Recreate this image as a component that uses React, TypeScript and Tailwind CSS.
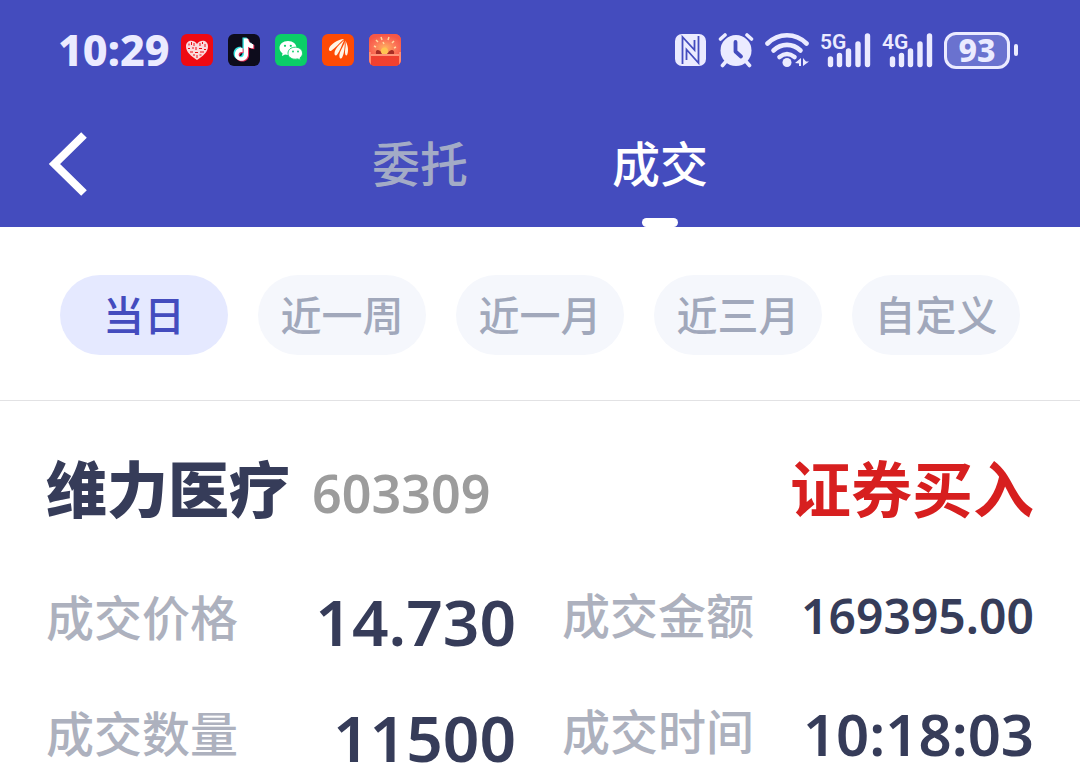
import React from "react";

const cjk = "font-['Noto_Sans','Noto_Sans_CJK_SC',sans-serif]";

function RedHeartIcon() {
  return (
    <svg viewBox="0 0 32 32" className="size-8" role="img" aria-label="红心">
      <rect width="32" height="32" rx="6" fill="#ee0a12" />
      <path d="M16 26 C10 22 5 18 5 12.500 C5 6 12.500 5 16 10 C19.500 5 27 6 27 12.500 C27 18 22 22 16 26Z" fill="#fbdcdc" />
      <path d="M8 9.500v2M10.500 8v3M13 9v3M19 9v3M21.500 8v2M24 10v3M7 14.500h2M11 14h2M15 13v3M18 14.500h3M23 15.500h2M9 18h3M14 18.500h3M19 18h4M12 21h2M16 21v3M18.500 21h2" stroke="#ee0a12" strokeWidth="1" fill="none" />
    </svg>
  );
}

function NoteIcon() {
  const note = "M16.500 5.500h4c.3 3.200 2.200 5.100 5 5.400v4c-1.900 0-3.600-.6-5-1.600v7.200c0 8.200-12.500 8.300-12.500.3 0-4.300 3.500-6.800 7.300-6.300v4.100c-4.700-1-4.700 4.800-1.500 4.800 1.700 0 2.700-1.200 2.700-3z";
  return (
    <svg viewBox="0 0 32 32" className="size-8" role="img" aria-label="抖音">
      <rect width="32" height="32" rx="6" fill="#0d0c1c" />
      <g transform="translate(-1.500 -1.300) scale(1.050)">
        <path d={note} fill="#35e3df" transform="translate(-1.300 -1)" />
        <path d={note} fill="#f0325c" transform="translate(1 .8)" />
        <path d={note} fill="#fff" />
      </g>
    </svg>
  );
}

function ChatIcon() {
  return (
    <svg viewBox="0 0 32 32" className="size-8" role="img" aria-label="微信">
      <rect width="32" height="32" rx="6" fill="#0bce68" />
      <path d="M13 7c-5 0-8.500 3-8.500 7 0 2.200 1.200 4 3 5.300L7 22l3-1.500c1 .3 2 .4 3 .4 5 0 8.500-3 8.500-6.900S18 7 13 7z" fill="#fff" />
      <path d="M20.300 13.200c-4.300 0-7.300 2.500-7.300 6s3 6 7.300 6c.9 0 1.700-.1 2.500-.3l2.700 1.300-.5-2.300c1.500-1.100 2.500-2.700 2.500-4.700 0-3.500-3-6-7.200-6z" fill="#fff" stroke="#0bce68" strokeWidth=".9" />
      <g fill="#0bce68">
        <circle cx="10" cy="11.800" r="1.100" />
        <circle cx="15.800" cy="11.800" r="1.100" />
        <circle cx="18" cy="17.500" r=".9" />
        <circle cx="23" cy="17.500" r=".9" />
      </g>
    </svg>
  );
}

function FeatherIcon() {
  return (
    <svg viewBox="0 0 32 32" className="size-8" role="img" aria-label="证券">
      <rect width="32" height="32" rx="6" fill="#fe4a04" />
      <g fill="#fff5e5">
        <path d="M22 5C16 5.500 8.500 10 7 14.500c-.5 2 .8 3.200 2.300 2.200C13.500 14 17 9.500 22 5z" />
        <path d="M22.300 6C18 10 12.500 15 12.500 19.500c0 2 1.600 2.600 2.700 1C18 17 19.500 11.500 22.300 6z" />
        <path d="M22.700 7.500C22 12.500 16.500 18 17.500 23c.4 1.900 1.900 2 2.800.3C22.300 19 23 13 22.700 7.500z" />
        <path d="M23.200 6.500c1.300 5-.7 9.500 0 13.500.3 1.800 1.500 1.800 2.200.2C26.800 16 25.800 10.500 23.200 6.500z" />
      </g>
    </svg>
  );
}

function FestiveIcon() {
  return (
    <svg viewBox="0 0 32 32" className="size-8" role="img" aria-label="红包">
      <defs>
        <linearGradient id="box" x1="0" y1="0" x2="0" y2="1">
          <stop offset="0" stopColor="#ef4030" />
          <stop offset="1" stopColor="#f2402f" />
        </linearGradient>
        <radialGradient id="glow" cx=".5" cy=".65" r=".6">
          <stop offset="0" stopColor="#ffb05e" />
          <stop offset=".6" stopColor="#fb7257" />
          <stop offset="1" stopColor="#f75746" />
        </radialGradient>
        <clipPath id="tile"><rect width="32" height="32" rx="6" /></clipPath>
      </defs>
      <g clipPath="url(#tile)">
        <rect width="32" height="32" fill="#f75746" />
        <rect width="32" height="21" fill="url(#glow)" />
        <path d="M7 6l2 2M12 3l1 3M20 3l-1 3M25 7l-2 2M5 12l2 1M27 13l-2 1M14 8l1 2" stroke="#ffd9a0" strokeWidth="1.500" />
        <path d="M7 20c-1-5 3-5 6-1h6c3-5 7-3 6 1z" fill="#a72d25" />
        <circle cx="15.500" cy="17" r="3.600" fill="#ffc552" />
        <rect y="20" width="32" height="2" fill="#ff9478" />
        <rect y="22" width="32" height="10" fill="url(#box)" />
        <path d="M0 18h2v14H0zM30 18h2v14h-2z" fill="#ff8a72" />
      </g>
    </svg>
  );
}

function NfcIcon() {
  return (
    <svg viewBox="0 0 32 32" className="size-8" role="img" aria-label="NFC">
      <rect x="0" y="0" width="31" height="32" rx="7" fill="#ebebff" />
      <path d="M7.500 30V3l12 13V6M11.500 26V15.500l12 13.500V2" fill="none" stroke="#444cbe" strokeWidth="1.800" />
    </svg>
  );
}

function AlarmIcon() {
  return (
    <svg viewBox="0 0 36 36" className="size-9" role="img" aria-label="闹钟">
      <circle cx="18" cy="18.500" r="15.500" fill="#ebebff" />
      <path d="M7 0 0 7l3 4 9-8zM29 0l7 7-3 4-9-8z" fill="#444cbe" />
      <path d="M2.500 7 7 3M33.500 7 29 3M7.500 30 4.500 33.500M28.500 30l3 3.500" stroke="#ebebff" strokeWidth="3.600" strokeLinecap="round" />
      <path d="M17.500 10v9.500l5.500 5" fill="none" stroke="#444cbe" strokeWidth="3.800" strokeLinecap="round" strokeLinejoin="round" />
    </svg>
  );
}

function WifiIcon() {
  return (
    <svg viewBox="0 0 44 36" className="h-9 w-11" role="img" aria-label="无线网络">
      <g fill="none" stroke="#ebebff" strokeWidth="4.600" strokeLinecap="round">
        <path d="M2.500 11.500c11-11 28-11 39 0" />
        <path d="M8.500 18.500c8-7.500 19-7.500 27 0" />
        <path d="M14.500 25c5-4 10-4 15 0" />
      </g>
      <circle cx="22" cy="30.500" r="4.500" fill="#ebebff" />
      <path d="M36 26v8h-2v-2.500l-4-.5zM38 26v8l6-4.500h-3z" fill="#ebebff" />
    </svg>
  );
}

function Signal({ label }: { label: string }) {
  return (
    <div className="relative h-9 w-[51px]">
      <svg viewBox="0 0 51 36" className="h-9 w-[51px]" aria-hidden="true">
        <path d="M10.500 27v5.500M19.500 23.500v9M28.500 19v13.500M38 12v20.500M47.500 4v28.500" stroke="#ebebff" strokeWidth="5.400" strokeLinecap="round" />
      </svg>
      <span className="absolute left-0 top-0 font-['Roboto',sans-serif] text-[21px] leading-5 font-semibold">{label}</span>
    </div>
  );
}

function Battery() {
  return (
    <div className="flex items-center gap-1" aria-label="电量 93%">
      <div className="flex h-[37px] w-[66px] items-center justify-center rounded-xl border-[3px] border-[#ebebff] bg-[#6a72cf] text-[32px] leading-8 font-extrabold">93</div>
      <div className="h-3 w-1 rounded-full bg-[#ebebff]" />
    </div>
  );
}

function StatusBar() {
  return (
    <div className="flex h-[100px] items-center justify-between pl-[58px] pr-[62px] text-[#ebebff]">
      <div className="flex items-center gap-[11px]">
        <time className="text-[43px] leading-10 font-extrabold">10:29</time>
        <div className="flex gap-[15px]">
          <RedHeartIcon />
          <NoteIcon />
          <ChatIcon />
          <FeatherIcon />
          <FestiveIcon />
        </div>
      </div>
      <div className="flex items-center gap-[11px]">
        <NfcIcon />
        <AlarmIcon />
        <WifiIcon />
        <Signal label="5G" />
        <Signal label="4G" />
        <Battery />
      </div>
    </div>
  );
}

function Header() {
  return (
    <nav className="grid h-[127px] grid-cols-[1fr_auto_1fr] px-12">
      <button type="button" aria-label="返回" className="h-[127px] w-10">
        <svg viewBox="0 0 40 64" className="h-16 w-10">
          <path d="M36 3 6.500 32 36 61" fill="none" stroke="#fff" strokeWidth="8" />
        </svg>
      </button>
      <div className="flex gap-36 text-5xl font-medium">
        <button type="button" className="text-[#a3abc6]">委托</button>
        <button type="button" aria-current="page" className="relative text-white">
          成交
          <span className="absolute bottom-0 left-1/2 h-[9px] w-9 -translate-x-1/2 rounded-full bg-white" />
        </button>
      </div>
    </nav>
  );
}

const ranges = ["当日", "近一周", "近一月", "近三月", "自定义"];

function RangeFilter() {
  return (
    <div className="grid grid-cols-5 gap-[30px] border-b border-[#e2e2e4] px-[60px] pt-12 pb-[45px]">
      {ranges.map((range, i) => (
        <button
          key={range}
          type="button"
          aria-pressed={i === 0}
          className={
            "flex h-20 items-center justify-center rounded-full text-[41px] leading-[80px] font-medium whitespace-nowrap " +
            (i === 0 ? "bg-[#e5e9ff] text-[#444cbe]" : "bg-[#f5f7fc] text-[#a1a8bb]")
          }
        >
          {range}
        </button>
      ))}
    </div>
  );
}

function Field({ label, value, size }: { label: string; value: string; size: string }) {
  return (
    <div className="flex h-[116px] items-center justify-between even:pb-1">
      <dt className="text-[48px] font-medium leading-[60px] text-[#adb1be]">{label}</dt>
      <dd className={"font-semibold text-[#363c59] " + size}>{value}</dd>
    </div>
  );
}

function Trade() {
  return (
    <article className="px-[46px] pt-11">
      <div className="flex items-baseline justify-between leading-[90px]">
        <h1 className="flex items-baseline gap-[22px] text-[61px] font-black text-[#363c59]">
          维力医疗
          <span className="text-[52px] font-semibold text-[#9c9c9c]">603309</span>
        </h1>
        <strong className="text-[61px] font-bold text-[#d71f1f]">证券买入</strong>
      </div>
      <dl className="grid grid-cols-[470px_1fr] gap-x-[46px] pt-[22px]">
        <Field label="成交价格" value="14.730" size="text-[64px] leading-[60px] pt-2" />
        <Field label="成交金额" value="169395.00" size="text-[48px] leading-[60px]" />
        <Field label="成交数量" value="11500" size="text-[64px] leading-[60px] pt-2" />
        <Field label="成交时间" value="10:18:03" size="text-[58px] leading-[60px] pt-1" />
      </dl>
    </article>
  );
}

export default function App() {
  return (
    <main className={"bg-white " + cjk}>
      <header className="bg-[#444cbe]">
        <StatusBar />
        <Header />
      </header>
      <RangeFilter />
      <Trade />
    </main>
  );
}
